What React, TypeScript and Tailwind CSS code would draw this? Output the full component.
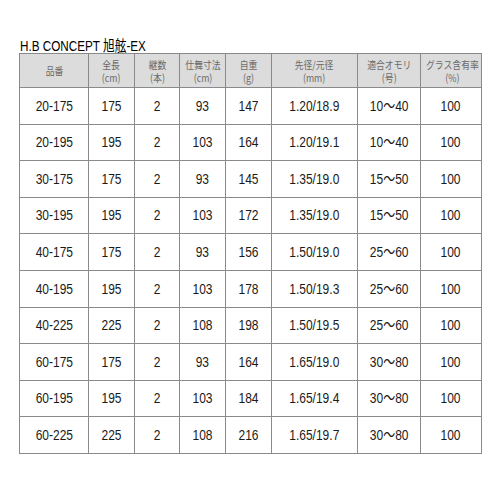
import React from "react";

const cols = [69, 46, 45, 46, 46, 86, 63, 61];
const headers: [string, string][] = [
  ["品番", ""],
  ["全長", "(cm)"],
  ["継数", "(本)"],
  ["仕舞寸法", "(cm)"],
  ["自重", "(g)"],
  ["先径/元径", "(mm)"],
  ["適合オモリ", "(号)"],
  ["グラス含有率", "(%)"],
];
const rows: string[][] = [
  ["20-175", "175", "2", "93", "147", "1.20/18.9", "10～40", "100"],
  ["20-195", "195", "2", "103", "164", "1.20/19.1", "10～40", "100"],
  ["30-175", "175", "2", "93", "145", "1.35/19.0", "15～50", "100"],
  ["30-195", "195", "2", "103", "172", "1.35/19.0", "15～50", "100"],
  ["40-175", "175", "2", "93", "156", "1.50/19.0", "25～60", "100"],
  ["40-195", "195", "2", "103", "178", "1.50/19.3", "25～60", "100"],
  ["40-225", "225", "2", "108", "198", "1.50/19.5", "25～60", "100"],
  ["60-175", "175", "2", "93", "164", "1.65/19.0", "30～80", "100"],
  ["60-195", "195", "2", "103", "184", "1.65/19.4", "30～80", "100"],
  ["60-225", "225", "2", "108", "216", "1.65/19.7", "30～80", "100"],
];

export default function App() {
  return (
    <div className="w-[500px] h-[500px] bg-white pt-[38px] pl-[19px]" style={{ fontFamily: '"Liberation Sans", "Noto Sans CJK JP", sans-serif' }}>
      <div className="text-[15px] leading-[15px] text-black h-[15px] pl-[1px]">
        <span className="inline-block origin-left scale-x-[0.78] whitespace-nowrap">H.B CONCEPT 旭舷-EX</span>
      </div>
      <table className="border-collapse table-fixed w-[462px] border border-[#9a9a9a]">
        <colgroup>
          {cols.map((w, i) => (
            <col key={i} style={{ width: w }} />
          ))}
        </colgroup>
        <thead>
          <tr className="h-[34px] bg-[#dcdcdc]">
            {headers.map(([a, b], i) => (
              <th key={i} className="border border-[#8a8a8a] font-normal text-[#6a6a6a] text-[10.5px] leading-[13px] text-center p-0 whitespace-nowrap" style={{ fontFamily: '"Noto Sans CJK JP", sans-serif' }}>
                <span className="inline-block scale-x-[0.84]">
                  <span className="block">{a}</span>
                  {b && <span className="block">{b}</span>}
                </span>
              </th>
            ))}
          </tr>
        </thead>
        <tbody>
          {rows.map((r, ri) => (
            <tr key={ri} className="h-[36.6px]">
              {r.map((c, ci) => (
                <td key={ci} className="border border-[#8a8a8a] text-center text-[15px] text-[#1a1a1a] p-0 whitespace-nowrap">
                  <span className="inline-block scale-x-[0.8]">{c}</span>
                </td>
              ))}
            </tr>
          ))}
        </tbody>
      </table>
    </div>
  );
}
